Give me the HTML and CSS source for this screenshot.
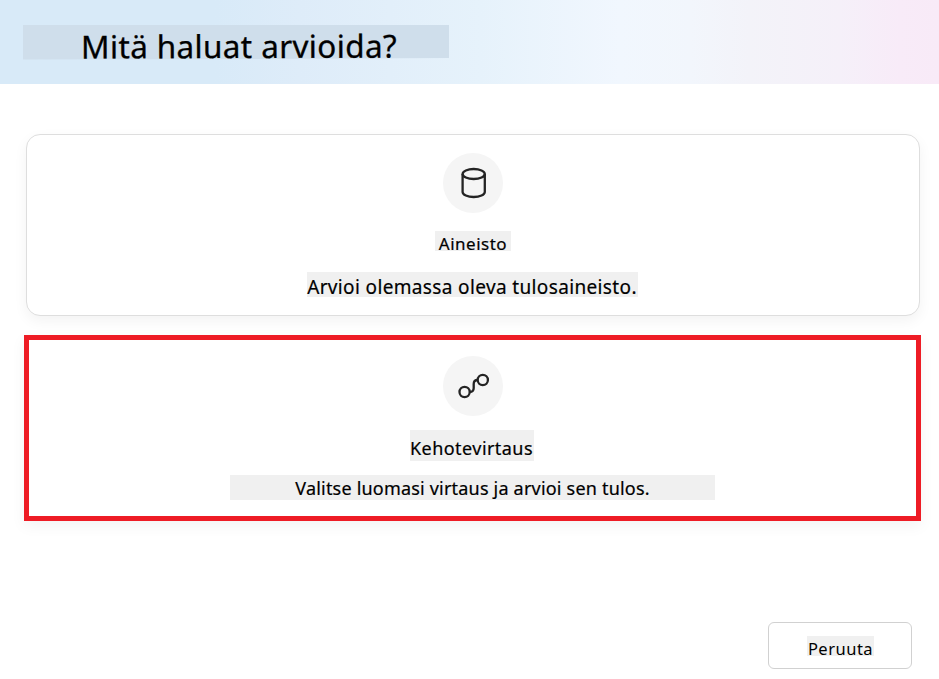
FILE: index.html
```html
<!DOCTYPE html>
<html lang="fi">
<head>
<meta charset="utf-8">
<title>Mitä haluat arvioida?</title>
<link rel="stylesheet" href="styles.css">
</head>
<body>
<header class="banner"><h1 class="title"><span>Mitä haluat arvioida?</span></h1></header>
<main class="options">
  <section class="card">
    <div class="icon">
      <svg width="60" height="60" viewBox="0 0 60 60"><ellipse cx="30.7" cy="21" rx="11.1" ry="5"/><path d="M19.6 21v18c0 2.8 5 5 11.1 5s11.1-2.2 11.1-5V21"/></svg>
    </div>
    <h2 class="label name-data"><span>Aineisto</span></h2>
    <p class="label text-data"><span>Arvioi olemassa oleva tulosaineisto.</span></p>
  </section>
  <section class="card selected">
    <div class="icon">
      <svg width="60" height="60" viewBox="0 0 60 60"><circle cx="21.6" cy="36" r="5.1"/><circle cx="39.8" cy="24" r="5.1"/><path d="M26.7 36c2.7 0 4-1.4 4-4v-4c0-2.6 1.3-4 4-4"/></svg>
    </div>
    <h2 class="label name-flow"><span>Kehotevirtaus</span></h2>
    <p class="label text-flow"><span>Valitse luomasi virtaus ja arvioi sen tulos.</span></p>
  </section>
</main>
<footer class="actions"><button class="cancel" type="button"><span class="label">Peruuta</span></button></footer>
</body>
</html>
```
FILE: styles.css
```css
* { box-sizing: border-box; }
body { margin: 0; width: 939px; height: 679px; overflow: hidden; background: #fff; color: #000; font-family: "Noto Sans", sans-serif; display: flex; flex-direction: column; }
h1, h2, p { margin: 0; white-space: nowrap; }
.banner { height: 84px; padding: 25px 0 0 23px; background: linear-gradient(90deg, #d8eaf8 0, #d8eaf8 215px, #deecf9 300px, #e6f2fb 480px, #f1f7fe 620px, #f2f6fc 690px, #f3f3f9 750px, #f5f0f9 840px, #f8ebf8 900px, #f8eaf7 100%); }
.title { width: 426px; height: 34.5px; background: #cfdeeb; clip-path: polygon(0 0, 100% 0, 100% 33px, 50% 34px, 0 34.5px); text-align: left; padding-left: 58px; font-size: 31.5px; letter-spacing: .35px; line-height: 42px; font-weight: 400; -webkit-text-stroke: .3px #000; }
.title span { display: inline-block; transform: rotate(-.15deg); }
.options { padding: 50px 19px 0 26px; display: flex; flex-direction: column; gap: 19px; }
.card { height: 182px; border: 1px solid #dedede; border-radius: 14px; background: #fff; box-shadow: 0 5px 14px rgba(0,0,0,.05); display: flex; flex-direction: column; align-items: center; padding-top: 18px; }
.icon { width: 60px; height: 60px; border-radius: 50%; background: #f5f5f5; flex: none; }
.icon svg { display: block; fill: none; stroke: #242424; stroke-width: 2.3; }
.label { background: #f0f0f0; display: flex; justify-content: center; font-weight: 400; -webkit-text-stroke: .2px #000; white-space: nowrap; flex: none; }
.name-data { width: 76px; height: 20px; margin-top: 18px; font-size: 17px; letter-spacing: .5px; line-height: 25px; }
.text-data { width: 331px; height: 25px; margin: 21px 2px 0 0; font-size: 19px; letter-spacing: .36px; line-height: 31px; }
.selected { width: 897px; height: 186px; margin-left: -2px; border: 5px solid #ee1c25; border-radius: 0; padding-top: 16px; }
.name-flow { width: 124px; height: 31px; margin: 14px 2px 0 0; font-size: 18px; letter-spacing: .45px; line-height: 36px; }
.text-flow { width: 485px; height: 25px; margin-top: 14px; font-size: 18px; letter-spacing: .2px; line-height: 26px; }
.actions { margin-top: auto; padding: 0 27px 10px 0; display: flex; justify-content: flex-end; }
.cancel { width: 144px; height: 47px; padding: 0; border: 1px solid #d1d1d1; border-radius: 6px; background: #fff; color: #000; font-family: inherit; display: flex; align-items: center; justify-content: center; }
.cancel .label { width: 67px; height: 20px; padding-left: 1px; font-size: 16.5px; letter-spacing: .5px; line-height: 26px; -webkit-text-stroke: 0; }
```
